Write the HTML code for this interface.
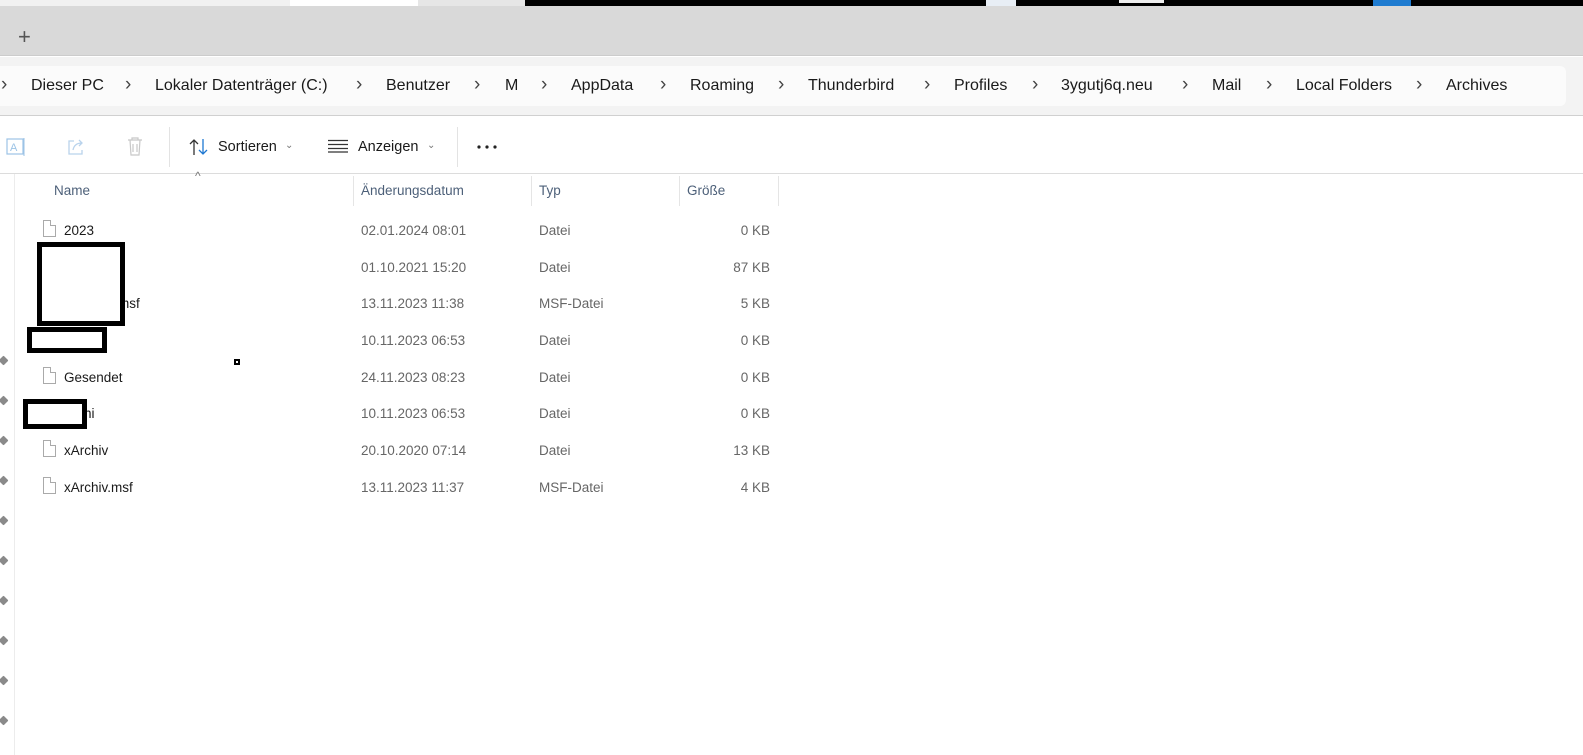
<!DOCTYPE html>
<html><head><meta charset="utf-8"><style>
*{margin:0;padding:0;box-sizing:border-box}
body{width:1583px;height:755px;position:relative;overflow:hidden;background:#fff;font-family:"Liberation Sans",sans-serif;color:#1a1a1a}
.a{position:absolute;white-space:nowrap}
.bc{font-size:16px;color:#1a1a1a;top:77px}
.sep{font-size:19px;color:#444;top:74px}
.r{font-size:13.5px}
.g{color:#666}
.fi{position:absolute;width:13px;height:17px;border:1px solid #aaa;background:#fff}
.fi:after{content:"";position:absolute;right:-1px;top:-1px;width:5px;height:5px;background:#fff;border-left:1px solid #aaa;border-bottom:1px solid #aaa}
.blk{position:absolute;border:5px solid #000;background:#fff}
.pin{position:absolute;left:0;width:7px;height:7px;background:#8a8a8a;transform:rotate(45deg);border-radius:1px}
</style></head><body>
<div class="a" style="left:0;top:0;width:290px;height:6px;background:#f1f1f1"></div>
<div class="a" style="left:290px;top:0;width:128px;height:6px;background:#fff"></div>
<div class="a" style="left:418px;top:0;width:107px;height:6px;background:#e6e6e6"></div>
<div class="a" style="left:525px;top:0;width:1058px;height:6px;background:#000"></div>
<div class="a" style="left:986px;top:0;width:30px;height:6px;background:#e8eef5"></div>
<div class="a" style="left:1119px;top:0;width:45px;height:3px;background:#eee"></div>
<div class="a" style="left:1373px;top:0;width:38px;height:6px;background:#1e7bd0"></div>
<div class="a" style="left:0;top:6px;width:1583px;height:50px;background:#d9d9d9;border-bottom:1px solid #ccc"></div>
<div class="a" style="left:18px;top:26px;font-size:22px;color:#555;line-height:22px">+</div>
<div class="a" style="left:0;top:57px;width:1583px;height:59px;background:#f3f3f3;border-bottom:1px solid #d0d0d0"></div>
<div class="a" style="left:0;top:66px;width:1566px;height:40px;background:#fbfbfb;border-radius:0 6px 6px 0"></div>
<span class="a sep" style="left:1px">›</span>
<span class="a bc" style="left:31px">Dieser PC</span>
<span class="a sep" style="left:125px">›</span>
<span class="a bc" style="left:155px">Lokaler Datenträger (C:)</span>
<span class="a sep" style="left:356px">›</span>
<span class="a bc" style="left:386px">Benutzer</span>
<span class="a sep" style="left:474px">›</span>
<span class="a bc" style="left:505px">M</span>
<span class="a sep" style="left:541px">›</span>
<span class="a bc" style="left:571px">AppData</span>
<span class="a sep" style="left:660px">›</span>
<span class="a bc" style="left:690px">Roaming</span>
<span class="a sep" style="left:778px">›</span>
<span class="a bc" style="left:808px">Thunderbird</span>
<span class="a sep" style="left:924px">›</span>
<span class="a bc" style="left:954px">Profiles</span>
<span class="a sep" style="left:1032px">›</span>
<span class="a bc" style="left:1061px">3ygutj6q.neu</span>
<span class="a sep" style="left:1182px">›</span>
<span class="a bc" style="left:1212px">Mail</span>
<span class="a sep" style="left:1266px">›</span>
<span class="a bc" style="left:1296px">Local Folders</span>
<span class="a sep" style="left:1416px">›</span>
<span class="a bc" style="left:1446px">Archives</span>
<!-- toolbar -->
<svg class="a" style="left:6px;top:137px" width="22" height="20" viewBox="0 0 22 20"><rect x="1" y="2" width="16" height="15" fill="none" stroke="#9cc3e6" stroke-width="1.2"/><text x="4" y="14" font-size="11" fill="#9cc3e6" font-family="Liberation Sans">A</text><line x1="18" y1="1" x2="18" y2="19" stroke="#9cc3e6"/></svg>
<svg class="a" style="left:66px;top:137px" width="20" height="20" viewBox="0 0 20 20"><path d="M8 4H3v13h13v-4" fill="none" stroke="#b9d3ec" stroke-width="1.3"/><path d="M7 13c1-5 4-7 9-7M13 3l3 3-3 3" fill="none" stroke="#b9d3ec" stroke-width="1.3"/></svg>
<svg class="a" style="left:126px;top:136px" width="18" height="22" viewBox="0 0 18 22"><path d="M2 4h14M6 4V2h6v2M4 4l1 15h8l1-15M7 8v8M11 8v8" fill="none" stroke="#c8c8c8" stroke-width="1.2"/></svg>
<div class="a" style="left:169px;top:127px;width:1px;height:40px;background:#e3e3e3"></div>
<svg class="a" style="left:188px;top:137px" width="22" height="20" viewBox="0 0 22 20"><path d="M6 18V3M2 7l4-4 4 4" fill="none" stroke="#333" stroke-width="1.3"/><path d="M15 2v15M11 13l4 4 4-4" fill="none" stroke="#1e78d2" stroke-width="1.3"/></svg>
<span class="a" style="left:218px;top:139px;font-size:14.5px">Sortieren</span>
<span class="a" style="left:285px;top:140px;font-size:10px;color:#777">⌄</span>
<svg class="a" style="left:328px;top:139px" width="20" height="14"><path d="M0 1.5h20M0 5.5h20M0 9.5h20M0 13h20" stroke="#333" stroke-width="1.2"/></svg>
<span class="a" style="left:358px;top:139px;font-size:14.5px">Anzeigen</span>
<span class="a" style="left:427px;top:140px;font-size:10px;color:#777">⌄</span>
<div class="a" style="left:457px;top:127px;width:1px;height:40px;background:#e3e3e3"></div>
<svg class="a" style="left:477px;top:145px" width="22" height="4"><circle cx="2" cy="2" r="1.6" fill="#222"/><circle cx="10" cy="2" r="1.6" fill="#222"/><circle cx="18" cy="2" r="1.6" fill="#222"/></svg>
<div class="a" style="left:0;top:173px;width:1583px;height:1px;background:#dcdcdc"></div>
<div class="a" style="left:14px;top:174px;width:1px;height:581px;background:#ececec"></div>
<!-- header -->
<span class="a" style="left:195px;top:169px;font-size:12px;color:#777">^</span>
<span class="a r" style="left:54px;top:183px;color:#4d6079">Name</span>
<div class="a" style="left:353px;top:176px;width:1px;height:30px;background:#e5e5e5"></div>
<span class="a r" style="left:361px;top:183px;color:#4d6079">Änderungsdatum</span>
<div class="a" style="left:531px;top:176px;width:1px;height:30px;background:#e5e5e5"></div>
<span class="a r" style="left:539px;top:183px;color:#4d6079">Typ</span>
<div class="a" style="left:679px;top:176px;width:1px;height:30px;background:#e5e5e5"></div>
<span class="a r" style="left:687px;top:183px;color:#4d6079">Größe</span>
<div class="a" style="left:778px;top:176px;width:1px;height:30px;background:#e5e5e5"></div>
<!-- rows -->
<div class="fi" style="left:43px;top:220px"></div><span class="a r" style="left:64px;top:223px">2023</span>
<span class="a r g" style="left:361px;top:223px">02.01.2024 08:01</span><span class="a r g" style="left:539px;top:223px">Datei</span><span class="a r g" style="left:700px;top:223px;width:70px;text-align:right">0 KB</span>
<span class="a r g" style="left:361px;top:260px">01.10.2021 15:20</span><span class="a r g" style="left:539px;top:260px">Datei</span><span class="a r g" style="left:700px;top:260px;width:70px;text-align:right">87 KB</span>
<span class="a r" style="left:118px;top:296px">msf</span>
<span class="a r g" style="left:361px;top:296px">13.11.2023 11:38</span><span class="a r g" style="left:539px;top:296px">MSF-Datei</span><span class="a r g" style="left:700px;top:296px;width:70px;text-align:right">5 KB</span>
<span class="a r g" style="left:361px;top:333px">10.11.2023 06:53</span><span class="a r g" style="left:539px;top:333px">Datei</span><span class="a r g" style="left:700px;top:333px;width:70px;text-align:right">0 KB</span>
<div class="fi" style="left:43px;top:367px"></div><span class="a r" style="left:64px;top:370px">Gesendet</span>
<span class="a r g" style="left:361px;top:370px">24.11.2023 08:23</span><span class="a r g" style="left:539px;top:370px">Datei</span><span class="a r g" style="left:700px;top:370px;width:70px;text-align:right">0 KB</span>
<span class="a r" style="left:84px;top:406px">hi</span>
<span class="a r g" style="left:361px;top:406px">10.11.2023 06:53</span><span class="a r g" style="left:539px;top:406px">Datei</span><span class="a r g" style="left:700px;top:406px;width:70px;text-align:right">0 KB</span>
<div class="fi" style="left:43px;top:440px"></div><span class="a r" style="left:64px;top:443px">xArchiv</span>
<span class="a r g" style="left:361px;top:443px">20.10.2020 07:14</span><span class="a r g" style="left:539px;top:443px">Datei</span><span class="a r g" style="left:700px;top:443px;width:70px;text-align:right">13 KB</span>
<div class="fi" style="left:43px;top:477px"></div><span class="a r" style="left:64px;top:480px">xArchiv.msf</span>
<span class="a r g" style="left:361px;top:480px">13.11.2023 11:37</span><span class="a r g" style="left:539px;top:480px">MSF-Datei</span><span class="a r g" style="left:700px;top:480px;width:70px;text-align:right">4 KB</span>
<!-- redactions -->
<div class="blk" style="left:37px;top:242px;width:88px;height:84px"></div>
<div class="blk" style="left:27px;top:327px;width:80px;height:26px"></div>
<div class="blk" style="left:23px;top:399px;width:64px;height:30px"></div>
<div class="a" style="left:234px;top:359px;width:6px;height:6px;border:2px solid #000"></div>
<!-- pins -->
<div class="pin" style="top:357px"></div><div class="pin" style="top:397px"></div><div class="pin" style="top:437px"></div><div class="pin" style="top:477px"></div><div class="pin" style="top:517px"></div><div class="pin" style="top:557px"></div><div class="pin" style="top:597px"></div><div class="pin" style="top:637px"></div><div class="pin" style="top:677px"></div><div class="pin" style="top:717px"></div>
</body></html>
